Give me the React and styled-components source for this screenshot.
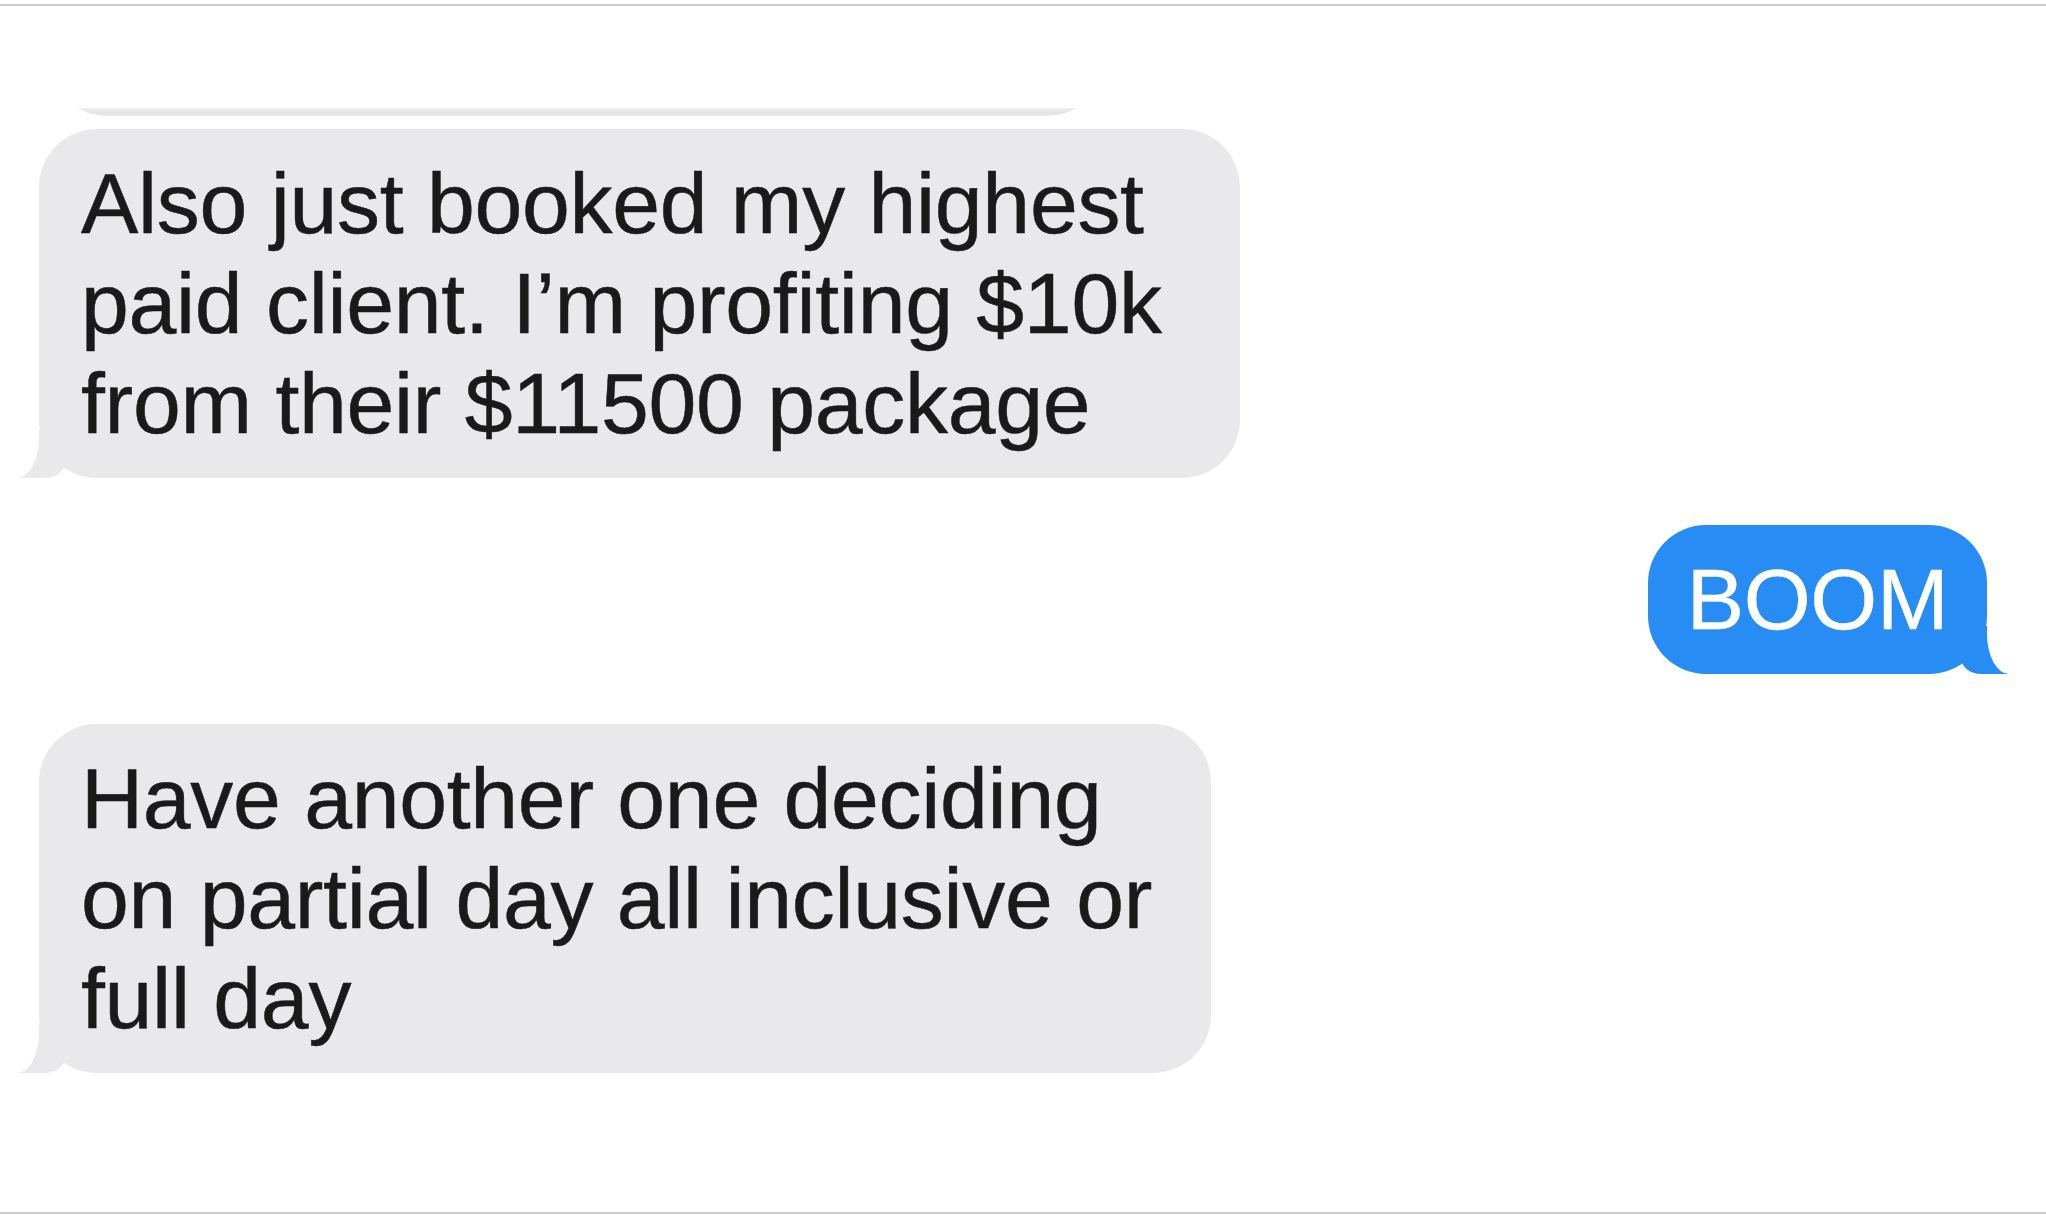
import React from "react";
import styled, { createGlobalStyle, css } from "styled-components";

const Global = createGlobalStyle`
  html, body { margin: 0; padding: 0; background: #ffffff; }
  body { font-family: "Liberation Sans", Arial, Helvetica, sans-serif; }
`;

const Frame = styled.div`
  box-sizing: border-box;
  margin-top: 4px;
  height: 1210px;
  border-top: 2px solid #cbcbcb;
  border-bottom: 2px solid #cbcbcb;
  padding: 0 59px 0 39px;
  overflow: hidden;
  display: flex;
  flex-direction: column;
`;

const Row = styled.div`
  display: flex;
  justify-content: ${(p) => (p.$side === "right" ? "flex-end" : "flex-start")};
  margin-top: ${(p) => p.$top}px;
`;

const Clip = styled.div`
  display: flex;
  align-items: flex-end;
  height: 8px;
  margin-top: ${(p) => p.$top}px;
  padding-left: 10px;
  overflow: hidden;
`;

const GRAY = "#e9e9eb";
const BLUE = "#278cf4";

const Bubble = styled.div`
  position: relative;
  box-sizing: border-box;
  flex: none;
  width: ${(p) => p.$w}px;
  padding: 24px 0 25px ${(p) => p.$pl}px;
  border-radius: 58px;
  background: ${(p) => (p.$me ? BLUE : GRAY)};
  color: ${(p) => (p.$me ? "#ffffff" : "#1a1a1a")};
  font-size: 86px;
  line-height: 100px;
  letter-spacing: -0.3px;
  -webkit-text-stroke: 0.5px ${(p) => (p.$me ? "#ffffff" : "#1a1a1a")};
  white-space: nowrap;
  text-align: ${(p) => (p.$me ? "center" : "left")};

  &::before {
    content: "";
    position: absolute;
    bottom: 0;
    width: 50px;
    height: 48px;
    background: ${(p) => (p.$me ? BLUE : GRAY)};
    ${(p) =>
      p.$me
        ? css`
            right: -24px;
            border-bottom-left-radius: 20px 16px;
          `
        : css`
            left: -24px;
            border-bottom-right-radius: 20px 16px;
          `}
  }

  &::after {
    content: "";
    position: absolute;
    bottom: 0;
    width: 64px;
    height: 52px;
    background: #ffffff;
    ${(p) =>
      p.$me
        ? css`
            left: 100%;
            border-bottom-left-radius: 22px 40px;
          `
        : css`
            right: 100%;
            border-bottom-right-radius: 22px 40px;
          `}
  }
`;

const Sliver = styled.div`
  flex: none;
  width: 1056px;
  height: 120px;
  border-radius: 58px;
  background: linear-gradient(to bottom, #f1f1f3 0%, #f1f1f3 93%, #e3e3e5 97%, #ebebed 100%);
`;

const messages = [
  {
    id: 1,
    me: false,
    top: 13,
    w: 1201,
    lines: ["Also just booked my highest", "paid client. I\u2019m profiting $10k", "from their $11500 package"],
  },
  { id: 2, me: true, top: 47, w: 339, lines: ["BOOM"] },
  {
    id: 3,
    me: false,
    top: 50,
    w: 1172,
    lines: ["Have another one deciding", "on partial day all inclusive or", "full day"],
  },
];

export default function App() {
  return (
    <>
      <Global />
      <Frame>
        <Clip $top={102}>
          <Sliver />
        </Clip>
        {messages.map((m) => (
          <Row key={m.id} $side={m.me ? "right" : "left"} $top={m.top}>
            <Bubble $me={m.me} $w={m.w} $pl={m.me ? 0 : 42}>
              {m.lines.map((l, i) => (
                <React.Fragment key={i}>
                  {i > 0 && <br />}
                  {l}
                </React.Fragment>
              ))}
            </Bubble>
          </Row>
        ))}
      </Frame>
    </>
  );
}
